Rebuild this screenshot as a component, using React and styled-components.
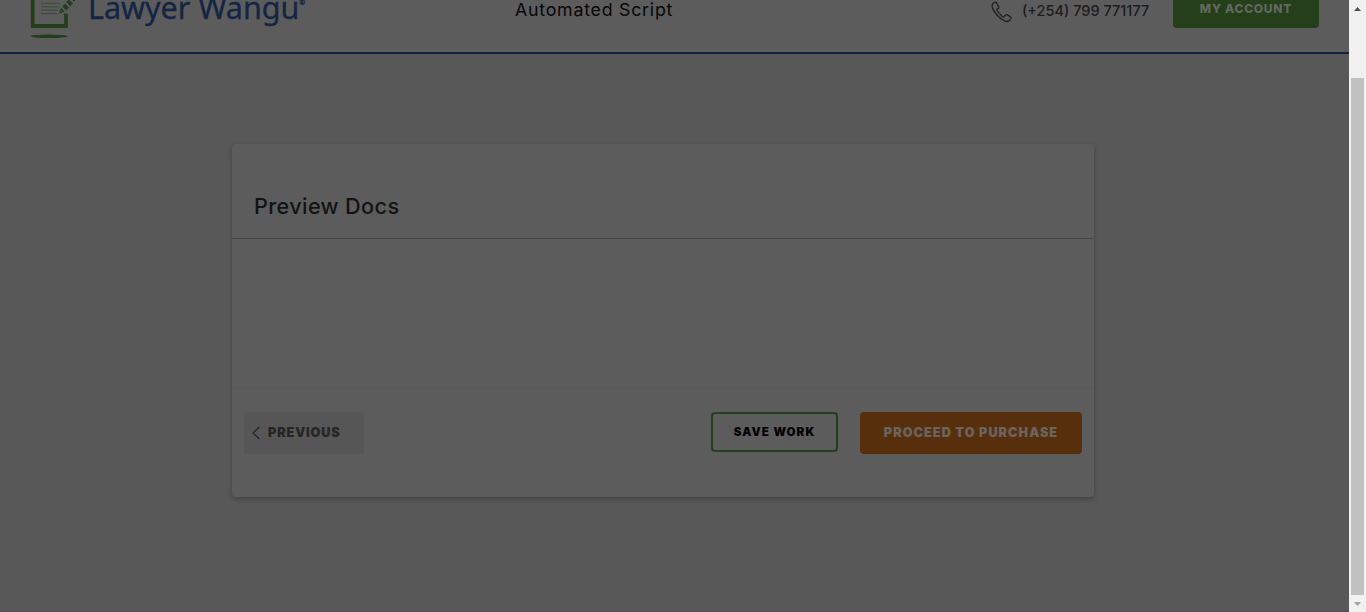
import React from "react";
import styled, { createGlobalStyle } from "styled-components";

const GlobalStyle = createGlobalStyle`
  * { box-sizing: border-box; }
  body { margin: 0; background: #585858; font-family: Inter, "Open Sans", sans-serif; overflow: hidden; }
  button { font-family: inherit; }
`;

const Screen = styled.div`
  display: flex;
  width: 1366px;
  height: 612px;
`;

const Page = styled.div`
  display: flex;
  flex-direction: column;
  width: 1349px;
  height: 612px;
  background: #585858;
  border-bottom: 1px solid #534e53;
`;

const Header = styled.header`
  display: flex;
  align-items: flex-start;
  flex: none;
  height: 54px;
  background: #5c5c5c;
  border-bottom: 2px solid #122342;
  overflow: hidden;
`;

const Logo = styled.div`
  display: flex;
  align-items: flex-start;
  width: 515px;
  padding-left: 28px;
`;

const Wordmark = styled.div`
  margin: -16px 0 0 10px;
  color: #142544;
  font: 400 30.5px/46px "Noto Sans", sans-serif;
  letter-spacing: -0.03px;
  white-space: nowrap;
  -webkit-text-stroke: 0.3px #142544;
`;

const Mark = styled.sup`
  font-size: 7px;
  line-height: 0;
  vertical-align: 14px;
`;

const ScriptName = styled.div`
  width: 476px;
  color: #070707;
  font-size: 17.8px;
  line-height: 20px;
  letter-spacing: 0.75px;
  white-space: nowrap;
`;

const Phone = styled.div`
  display: flex;
  gap: 10px;
  width: 182px;
  color: #1d1d1d;
  font-size: 14.5px;
  font-weight: 500;
  line-height: 21px;
  letter-spacing: 0;
  white-space: nowrap;
`;

const AccountButton = styled.button`
  width: 146px;
  height: 40px;
  margin-top: -12px;
  padding: 0;
  border: 0;
  border-radius: 4px;
  background: #243f1a;
  color: #626860;
  font-size: 12px;
  font-weight: 800;
  letter-spacing: 0.75px;
  white-space: nowrap;
`;

const Card = styled.main`
  display: flex;
  flex-direction: column;
  width: 862px;
  height: 353px;
  margin: 90px 0 0 232px;
  border-radius: 4px;
  background: #5c5c5c;
  box-shadow: 0 2px 5px rgba(0, 0, 0, 0.25);
`;

const Title = styled.h1`
  height: 95px;
  margin: 0;
  padding: 47px 0 0 22px;
  border-bottom: 1px solid #474747;
  color: #121414;
  font-size: 21.7px;
  font-weight: 500;
  line-height: 31px;
  letter-spacing: 0.35px;
`;

const Preview = styled.section`
  height: 150px;
  border-bottom: 1px solid #595959;
`;

const Actions = styled.footer`
  display: flex;
  align-items: flex-start;
  padding: 23px 12px 0;
`;

const Action = styled.button`
  display: flex;
  align-items: center;
  justify-content: center;
  flex: none;
  width: ${(p) => p.$width}px;
  height: 42px;
  padding: 0 0 1px;
  border: 0;
  border-radius: 4px;
  font-size: 12.7px;
  font-weight: 900;
  white-space: nowrap;
`;

const PreviousButton = styled(Action)`
  justify-content: flex-start;
  gap: 8px;
  padding-left: 8px;
  margin-right: auto;
  background: #565656;
  color: #252525;
  letter-spacing: 0.85px;
`;

const SaveButton = styled(Action)`
  height: 40px;
  margin-right: 22px;
  padding: 0;
  border: 2px solid #243f1a;
  background: transparent;
  color: #020202;
  font-size: 11.6px;
  letter-spacing: 1.1px;
`;

const PurchaseButton = styled(Action)`
  background: #582f0d;
  color: #6b645e;
  letter-spacing: 1.02px;
`;

const Scrollbar = styled.div`
  display: flex;
  flex-direction: column;
  align-items: center;
  justify-content: space-between;
  width: 17px;
  height: 612px;
  padding: 7px 0 6px;
  background: #f1f1f1;
`;

const Thumb = styled.div`
  width: 13px;
  height: 517px;
  margin-top: 60px;
  background: #c1c1c1;
`;

const Drawing = styled.svg`
  display: block;
  flex: none;
`;

function DocumentLogo() {
  return (
    <Drawing width="50" height="40" viewBox="28 0 50 40">
      <path d="M32.7 -3V26H66V13.5" fill="none" stroke="#243f1a" strokeWidth="3.8" />
      <path d="M41 3.3H60M41 6.8H59M41 10.2H58M41 13.6H57" stroke="#3b4b35" strokeWidth="1" />
      <path d="M58.5 14L61 7.5L64.8 11.4Z" fill="#243f1a" />
      <path d="M59 13.5L62 10" stroke="#5c5c5c" strokeWidth=".7" />
      <path d="M62.2 6.4L65 3.6L69 7.6L66.2 10.4ZM66.3 2.3L69 -.5L73 3.5L70.3 6.2ZM71 -2L76 -2L74 2Z" fill="#243f1a" />
      <ellipse cx="49" cy="36.2" rx="18.5" ry="1.7" fill="#243f1a" />
    </Drawing>
  );
}

function Handset() {
  return (
    <Drawing width="21" height="23" viewBox="0 0 21 23">
      <path
        d="M3.5 2.3C1.6 3.4 .6 5.6 1.5 8C3.3 13 8.5 18.8 14 21.1C16.6 22.2 18.7 20.8 20 18.5C20.2 17.8 20 17.3 19.4 16.9L16.4 14.9C15.8 14.5 15 14.6 14.5 15.1L13.2 16.5C12.6 17 12 16.9 11.4 16.4C9.5 14.8 7.5 12.7 6.1 10.5C5.7 9.9 5.8 9.5 6.3 9.1L7.4 8.2C7.9 7.7 7.9 7.1 7.6 6.6L5.5 2.9C5 2.1 4.2 1.9 3.5 2.3Z"
        fill="none"
        stroke="#202020"
        strokeWidth="1.3"
      />
    </Drawing>
  );
}

export default function App() {
  return (
    <Screen>
      <GlobalStyle />
      <Page>
        <Header>
          <Logo>
            <DocumentLogo />
            <Wordmark>Lawyer Wangu<Mark>®</Mark></Wordmark>
          </Logo>
          <ScriptName>Automated Script</ScriptName>
          <Phone><Handset />(+254) 799 771177</Phone>
          <AccountButton>MY ACCOUNT</AccountButton>
        </Header>
        <Card>
          <Title>Preview Docs</Title>
          <Preview />
          <Actions>
            <PreviousButton $width={120}>
              <Drawing width="8" height="14" viewBox="0 0 8 14">
                <path d="M7.3 1L1 7L7.3 13" fill="none" stroke="#252525" strokeWidth="1.2" />
              </Drawing>
              PREVIOUS
            </PreviousButton>
            <SaveButton $width={127}>SAVE WORK</SaveButton>
            <PurchaseButton $width={222}>PROCEED TO PURCHASE</PurchaseButton>
          </Actions>
        </Card>
      </Page>
      <Scrollbar>
        <Drawing width="7" height="4" viewBox="0 0 7 4"><path d="M0 4L3.5 0L7 4Z" fill="#505050" /></Drawing>
        <Thumb />
        <Drawing width="7" height="4" viewBox="0 0 7 4"><path d="M0 0H7L3.5 4Z" fill="#a3a3a3" /></Drawing>
      </Scrollbar>
    </Screen>
  );
}
